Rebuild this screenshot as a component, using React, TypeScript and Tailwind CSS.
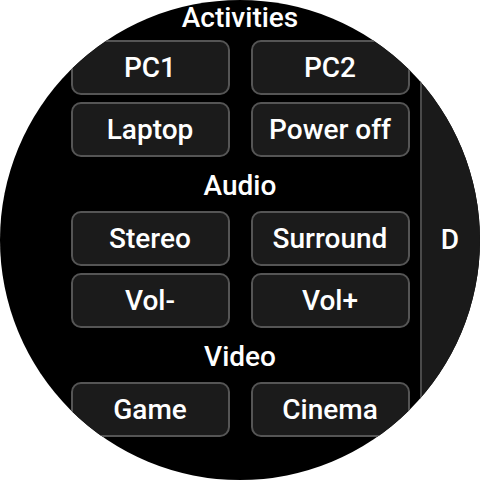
import React from 'react';

const sections: { title: string; buttons: string[] }[] = [
  { title: 'Activities', buttons: ['PC1', 'PC2', 'Laptop', 'Power off'] },
  { title: 'Audio', buttons: ['Stereo', 'Surround', 'Vol-', 'Vol+'] },
  { title: 'Video', buttons: ['Game', 'Cinema'] },
];

const RemoteButton: React.FC<{ label: string }> = ({ label }) => (
  <button className="h-[55px] rounded-[10px] border-2 border-[#555555] bg-[#1b1b1b] text-[28px] font-medium leading-none text-white">
    {label}
  </button>
);

export default function App() {
  return (
    <div className="h-[480px] w-[480px] bg-white" style={{ fontFamily: 'Roboto, "Noto Sans", sans-serif' }}>
      <div className="relative h-[480px] w-[480px] overflow-hidden rounded-full bg-black">
        <div className="-mt-[7px] flex flex-col gap-[7px]">
          {sections.map((s, i) => (
            <React.Fragment key={s.title}>
              <div
                className={
                  i === 0
                    ? 'h-[40px] pt-[10px] text-center text-[28px] font-medium leading-[30px] text-white'
                    : 'h-[40px] pt-[7px] text-center text-[28px] font-medium leading-[30px] text-white'
                }
              >
                {s.title}
              </div>
              <div className="mx-auto grid w-[339px] grid-cols-2 gap-x-[21px] gap-y-[7px]">
                {s.buttons.map((b) => (
                  <RemoteButton key={b} label={b} />
                ))}
              </div>
            </React.Fragment>
          ))}
        </div>

        {/* side drawer edge */}
        <div className="absolute right-0 top-0 flex h-full w-[60px] items-center justify-center border-l-2 border-[#4a4a4a] bg-[#1a1a1a] pr-[2px]">
          <span className="text-[28px] font-medium text-white">D</span>
        </div>
      </div>
    </div>
  );
}
